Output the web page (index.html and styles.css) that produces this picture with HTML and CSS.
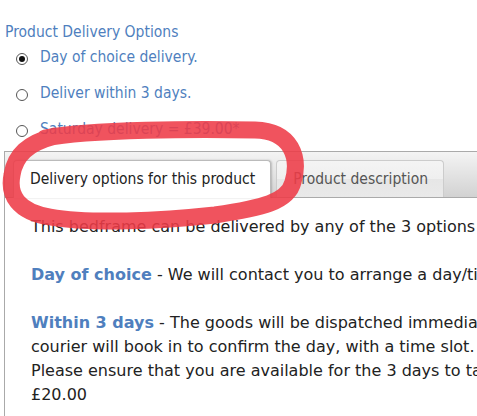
FILE: index.html
```html
<!DOCTYPE html>
<html lang="en">
<head>
<meta charset="UTF-8">
<meta name="viewport" content="width=device-width, initial-scale=1.0">
<title>Product Delivery Options</title>
<link rel="stylesheet" href="styles.css">
</head>
<body>
    <div class="page">
        <div class="options">
            <h3 class="options-title">Product Delivery Options</h3>
            <ul class="choice-list">
                <li class="choice"><span class="radio checked"></span>Day of choice delivery.</li>
                <li class="choice"><span class="radio"></span>Deliver within 3 days.</li>
                <li class="choice"><span class="radio"></span>Saturday delivery = £39.00*</li>
            </ul>
        </div>

        <div class="tabs">
            <ul class="tab-nav">
                <li class="tab active">Delivery options for this product</li>
                <li class="tab">Product description</li>
            </ul>
            <div class="tab-panel">
                <p>This bedframe can be delivered by any of the 3 options below.</p>
                <p><b class="lead">Day of choice</b> - We will contact you to arrange a day/time that suits you.</p>
                <p><b class="lead">Within 3 days</b> - The goods will be dispatched immediately and the<br>
                courier will book in to confirm the day, with a time slot.<br>
                Please ensure that you are available for the 3 days to take delivery.<br>
                £20.00</p>
            </div>
        </div>

        <!-- hand drawn marker around the first tab -->
        <svg class="scribble" width="477" height="416" viewBox="0 0 477 416">
            <path d="M45 138 C90 129 200 129 255 130 C292 131 300 158 293 182 C288 202 262 208 215 215 C160 221 90 224 50 217 C18 212 8 195 12 175 C15 155 28 143 55 136"
                  fill="none" stroke="#ee3c48" stroke-width="17" stroke-linecap="round" stroke-linejoin="round"/>
        </svg>
    </div>
</body>
</html>
```

FILE: styles.css
```css
html, body {
    overflow: hidden;
}
body {
    margin: 0;
    background-color: #fff;
}
.page {
    position: relative;
    width: 477px;
    height: 416px;
}
.options {
    padding: 25px 0 0 5px;
    font-family: "DejaVu Sans Condensed", "Liberation Sans", sans-serif;
    font-size: 15.5px;
    color: #4f7fbe;
}
.options-title {
    margin: 0;
    font-size: 15.5px;
    font-weight: normal;
    line-height: 14px;
}
.choice-list {
    margin: 0;
    padding: 0;
    list-style: none;
}
.choice {
    height: 36px;
    line-height: 36px;
    white-space: nowrap;
}
.radio {
    display: inline-block;
    box-sizing: border-box;
    width: 12px;
    height: 12px;
    margin: 0 12px 0 11px;
    border: 1px solid #555;
    border-radius: 50%;
    background: #fff;
    vertical-align: -3px;
    position: relative;
}
.radio.checked::after {
    content: "";
    position: absolute;
    left: 2px;
    top: 2px;
    width: 6px;
    height: 6px;
    border-radius: 50%;
    background: #111;
}
.tabs {
    width: 700px;
    margin: 4px 0 0 4px;
    border: 1px solid #aaa;
}
.tab-nav {
    display: flex;
    align-items: flex-end;
    gap: 5px;
    margin: 0;
    padding: 8px 0 0 8px;
    list-style: none;
    background: linear-gradient(#f4f4f4, #d2d2d2);
    border-bottom: 1px solid #aaa;
}
.tab {
    box-sizing: border-box;
    height: 37px;
    padding: 0 15px 0 16px;
    line-height: 36px;
    font-family: "DejaVu Sans Condensed", "Liberation Sans", sans-serif;
    font-size: 15.5px;
    color: #555;
    white-space: nowrap;
    border: 1px solid #ccc;
    border-bottom: none;
    border-radius: 4px 4px 0 0;
    background: linear-gradient(#f4f4f4 0%, #efefef 50%, #e6e6e6 51%, #e9e9e9 100%);
}
.tab.active {
    height: 38px;
    margin-bottom: -1px;
    color: #222;
    background: #fff;
    border-color: #bbb;
    box-shadow: 1px 0 2px rgba(0, 0, 0, 0.2);
}
.tab-panel {
    padding: 17px 26px;
    font-family: "DejaVu Sans", Verdana, sans-serif;
    font-size: 16px;
    line-height: 24px;
    color: #222;
    white-space: nowrap;
}
.tab-panel p {
    margin: 0 0 24px;
}
.lead {
    color: #4f7fbe;
}
.scribble {
    position: absolute;
    left: 0;
    top: 0;
    pointer-events: none;
    opacity: 0.88;
}
```
